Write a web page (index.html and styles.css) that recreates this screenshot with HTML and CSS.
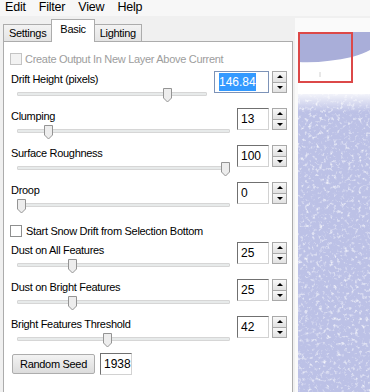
FILE: index.html
```html
<!DOCTYPE html>
<html lang="en">

<head>
    <meta charset="UTF-8" />
    <title>Snow Drift</title>
    <link rel="stylesheet" href="styles.css">
</head>

<body>
    <div class="menubar">
        <span>Edit</span>
        <span>Filter</span>
        <span>View</span>
        <span>Help</span>
    </div>

    <div class="main">
        <div class="dialog">
            <div class="tabs">
                <div class="tab">Settings</div>
                <div class="tab active">Basic</div>
                <div class="tab">Lighting</div>
            </div>

            <div class="panel">
                <div class="check disabled"><span class="box"></span>Create Output In New Layer Above Current</div>

                <div class="field wide">
                    <div class="label">Drift Height (pixels)</div>
                    <div class="slider">
                        <div class="track"></div>
                        <svg class="thumb" style="--v: 0.804" viewBox="0 0 9 15"><path d="M.5 .5h8v9.5l-4 4-4-4z" /></svg>
                    </div>
                    <div class="spin">
                        <div class="num focus"><span class="sel">146.84</span></div>
                        <div class="arrows"><span class="up"></span><span class="down"></span></div>
                    </div>
                </div>

                <div class="field">
                    <div class="label">Clumping</div>
                    <div class="slider">
                        <div class="track"></div>
                        <svg class="thumb" style="--v: 0.13" viewBox="0 0 9 15"><path d="M.5 .5h8v9.5l-4 4-4-4z" /></svg>
                    </div>
                    <div class="spin">
                        <div class="num">13</div>
                        <div class="arrows"><span class="up"></span><span class="down"></span></div>
                    </div>
                </div>

                <div class="field">
                    <div class="label">Surface Roughness</div>
                    <div class="slider">
                        <div class="track"></div>
                        <svg class="thumb" style="--v: 1" viewBox="0 0 9 15"><path d="M.5 .5h8v9.5l-4 4-4-4z" /></svg>
                    </div>
                    <div class="spin">
                        <div class="num">100</div>
                        <div class="arrows"><span class="up"></span><span class="down"></span></div>
                    </div>
                </div>

                <div class="field">
                    <div class="label">Droop</div>
                    <div class="slider">
                        <div class="track"></div>
                        <svg class="thumb" style="--v: 0" viewBox="0 0 9 15"><path d="M.5 .5h8v9.5l-4 4-4-4z" /></svg>
                    </div>
                    <div class="spin">
                        <div class="num">0</div>
                        <div class="arrows"><span class="up"></span><span class="down"></span></div>
                    </div>
                </div>

                <div class="check tall"><span class="box"></span>Start Snow Drift from Selection Bottom</div>

                <div class="field">
                    <div class="label">Dust on All Features</div>
                    <div class="slider">
                        <div class="track"></div>
                        <svg class="thumb" style="--v: 0.25" viewBox="0 0 9 15"><path d="M.5 .5h8v9.5l-4 4-4-4z" /></svg>
                    </div>
                    <div class="spin">
                        <div class="num">25</div>
                        <div class="arrows"><span class="up"></span><span class="down"></span></div>
                    </div>
                </div>

                <div class="field">
                    <div class="label">Dust on Bright Features</div>
                    <div class="slider">
                        <div class="track"></div>
                        <svg class="thumb" style="--v: 0.25" viewBox="0 0 9 15"><path d="M.5 .5h8v9.5l-4 4-4-4z" /></svg>
                    </div>
                    <div class="spin">
                        <div class="num">25</div>
                        <div class="arrows"><span class="up"></span><span class="down"></span></div>
                    </div>
                </div>

                <div class="field">
                    <div class="label">Bright Features Threshold</div>
                    <div class="slider">
                        <div class="track"></div>
                        <svg class="thumb" style="--v: 0.42" viewBox="0 0 9 15"><path d="M.5 .5h8v9.5l-4 4-4-4z" /></svg>
                    </div>
                    <div class="spin">
                        <div class="num">42</div>
                        <div class="arrows"><span class="up"></span><span class="down"></span></div>
                    </div>
                </div>

                <div class="seed-row">
                    <button class="btn">Random Seed</button>
                    <div class="num">1938</div>
                </div>
            </div>
        </div>

        <div class="preview">
            <svg width="72" height="360" viewBox="0 0 72 360">
                <defs>
                    <filter id="snow" x="0" y="0" width="100%" height="100%">
                        <feTurbulence type="fractalNoise" baseFrequency="0.28" numOctaves="3" seed="7" />
                        <feColorMatrix type="matrix" values="0 0 0 0 1  0 0 0 0 1  0 0 0 0 1  2.4 0 0 0 -1.3" />
                    </filter>
                    <linearGradient id="fade" x1="0" y1="0" x2="0" y2="1">
                        <stop offset="0" stop-color="#fff" />
                        <stop offset="1" stop-color="#fff" stop-opacity="0" />
                    </linearGradient>
                </defs>
                <rect width="72" height="360" fill="#fff" />
                <rect width="72" height="34" fill="#a9aed9" />
                <path d="M0 30 C18 31 36 29 54 25 C62 23 68 20 72 18 V40 H0 Z" fill="#fff" />
                <rect y="62" width="72" height="298" fill="#bcc1e6" />
                <rect y="62" width="72" height="298" filter="url(#snow)" />
                <rect y="58" width="72" height="22" fill="url(#fade)" />
                <line x1="22" y1="40" x2="22" y2="45" stroke="#d0d0d0" />
                <rect x="1" y="1" width="53" height="49" fill="none" stroke="#dc4848" stroke-width="2" />
            </svg>
        </div>
    </div>
</body>

</html>
```

FILE: styles.css
```css
* {
    margin: 0;
    padding: 0;
    box-sizing: border-box;
}

body {
    width: 370px;
    height: 392px;
    overflow: hidden;
    background-color: #f0f0f0;
    font-family: "Liberation Sans", Arial, sans-serif;
    font-size: 11px;
    letter-spacing: -0.3px;
    color: #000;
}

/* menu */

.menubar {
    display: flex;
    gap: 13px;
    height: 16px;
    padding-left: 5px;
    background-color: #f7f7f7;
    font-size: 12.5px;
    line-height: 15px;
    letter-spacing: -0.2px;
}

.main {
    display: flex;
}

.dialog {
    width: 290px;
    margin-left: 3px;
}

/* tabs */

.tabs {
    display: flex;
    align-items: flex-end;
    height: 25px;
}

.tab {
    height: 17px;
    padding: 0 5px;
    margin-right: -1px;
    line-height: 16px;
    border: 1px solid #acacac;
    border-bottom: none;
    background: linear-gradient(#f3f3f3, #e4e4e4);
}

.tab.active {
    position: relative;
    z-index: 1;
    height: 23px;
    padding: 0 8px;
    margin-bottom: -1px;
    line-height: 19px;
    background: #fff;
}

.panel {
    height: 360px;
    padding: 10px 5px 0 7px;
    border: 1px solid #acacac;
    background-color: #fff;
}

/* checkboxes */

.check {
    display: flex;
    align-items: center;
    gap: 3px;
    height: 14px;
    margin-bottom: 5px;
}

.check.tall {
    height: 23px;
    margin-bottom: 0;
    gap: 4px;
}

.check .box {
    width: 12px;
    height: 12px;
    margin-left: -1px;
    border: 1px solid #8e8f8f;
    background-color: #fff;
}

.check.disabled {
    color: #9d9d9d;
}

.check.disabled .box {
    border-color: #c4c4c4;
    background-color: #f2f2f2;
}

/* slider fields */

.field {
    display: grid;
    grid-template-columns: 1fr auto;
    grid-template-rows: 16px 21px;
    column-gap: 7px;
    height: 37px;
}

.label {
    grid-column: 1;
    grid-row: 1;
    padding-top: 1px;
    line-height: 14px;
}

.slider {
    position: relative;
    grid-column: 1;
    grid-row: 2;
    margin-left: 6px;
}

.track {
    position: absolute;
    left: 0;
    right: 0;
    top: 5px;
    height: 4px;
    border: 1px solid #d6d6d6;
    border-radius: 1px;
    background-color: #e7eaea;
}

.thumb {
    position: absolute;
    top: 1px;
    left: calc((100% - 9px) * var(--v));
    width: 9px;
    height: 15px;
}

.thumb path {
    fill: #ededed;
    stroke: #949494;
}

.spin {
    display: flex;
    gap: 3px;
    grid-column: 2;
    grid-row: 1 / 3;
    align-self: start;
    height: 22px;
}

.num {
    width: 32px;
    height: 22px;
    padding-left: 3px;
    border: 1px solid;
    border-color: #707070 #d2d2d2 #d2d2d2 #707070;
    background-color: #fff;
    font-size: 12px;
    line-height: 20px;
    letter-spacing: 0;
}

.field.wide .num {
    width: 55px;
}

.num.focus {
    border-color: #7d93b8;
    padding-left: 4px;
}

.sel {
    background-color: #3399ff;
    color: #fff;
    padding: 2px 0;
}

.arrows {
    display: flex;
    flex-direction: column;
    width: 15px;
}

.arrows span {
    display: flex;
    flex: 1;
    align-items: center;
    justify-content: center;
    border: 1px solid #a9a9a9;
    background: linear-gradient(#f8f8f8, #e1e1e1);
}

.arrows span + span {
    border-top: none;
}

.arrows .up::before,
.arrows .down::before {
    content: "";
    border-left: 3px solid transparent;
    border-right: 3px solid transparent;
}

.arrows .up::before {
    border-bottom: 3px solid #000;
}

.arrows .down::before {
    border-top: 3px solid #000;
}

/* seed */

.seed-row {
    display: flex;
    align-items: flex-start;
    gap: 5px;
    margin-left: 1px;
}

.btn {
    width: 83px;
    height: 20px;
    margin-top: 1px;
    border: 1px solid #adadad;
    border-radius: 2px;
    background: linear-gradient(#f3f3f3, #dcdcdc);
    font-family: inherit;
    font-size: 11px;
    letter-spacing: -0.3px;
    color: #000;
}

/* preview */

.preview {
    flex: 1;
    margin: 2px 0 0 2px;
    padding: 14px 0 0 3px;
    background-color: #fafafa;
}

.preview svg {
    display: block;
}
```
